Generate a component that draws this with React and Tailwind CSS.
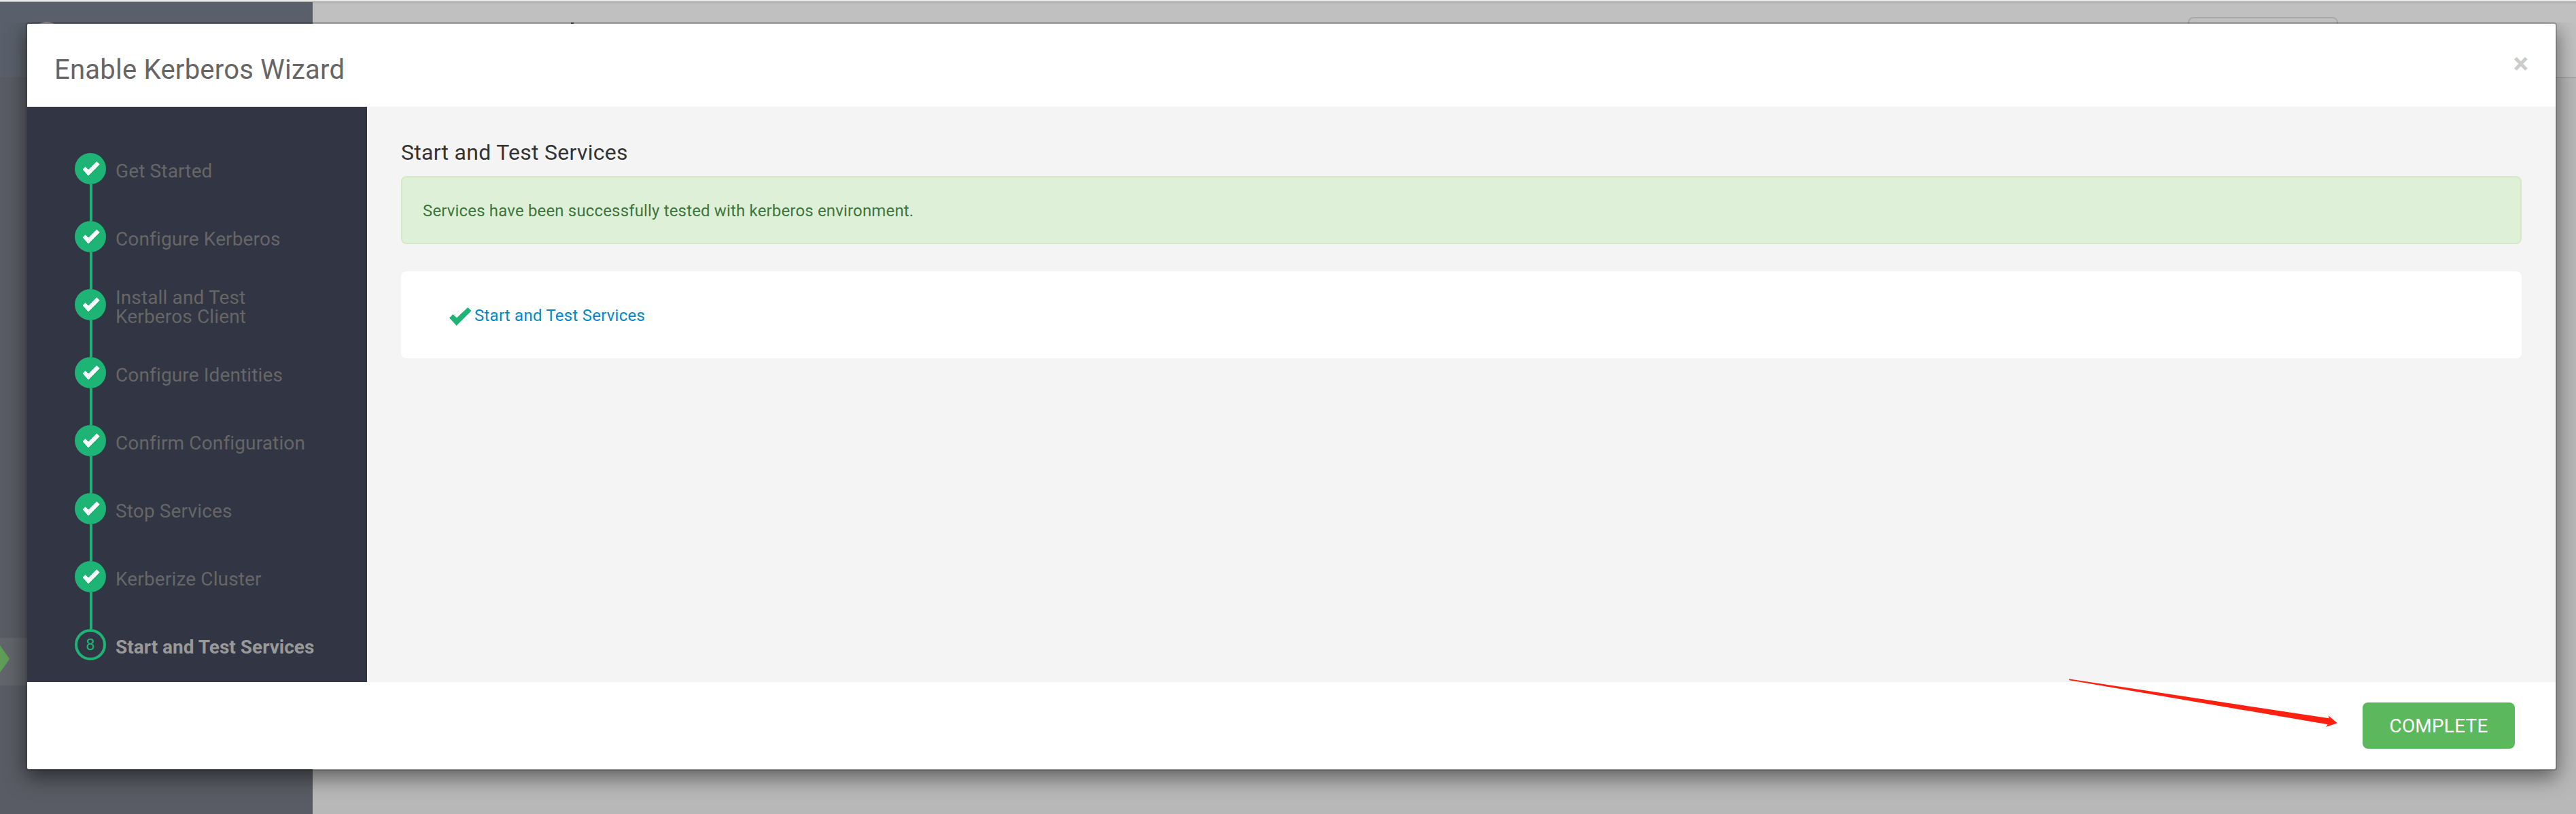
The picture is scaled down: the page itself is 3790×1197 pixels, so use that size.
import React from "react";

const steps = [
  "Get Started",
  "Configure Kerberos",
  "Install and Test Kerberos Client",
  "Configure Identities",
  "Confirm Configuration",
  "Stop Services",
  "Kerberize Cluster",
  "Start and Test Services",
];

function StepBadge({ active, number }) {
  if (active) {
    return (
      <div className="flex h-[46px] w-[46px] shrink-0 items-center justify-center rounded-full border-4 border-[#1eb475] text-2xl leading-none text-[#1eb475]">
        {number}
      </div>
    );
  }
  return (
    <div className="h-[46px] w-[46px] shrink-0 rounded-full bg-[#1eb475]">
      <svg viewBox="0 0 46 46" className="h-full w-full">
        <path
          d="M12 24L15.7 20.9L20 25L32.3 12.9L36 16.7L20 33Z"
          fill="#fff"
          stroke="#fff"
          strokeWidth="1"
          strokeLinejoin="round"
        />
      </svg>
    </div>
  );
}

function Step({ label, number, active }) {
  return (
    <li className="flex h-[100px]">
      <div className="flex w-[46px] flex-col items-center">
        <StepBadge active={active} number={number} />
        {!active && <div className="ml-[2px] w-1 flex-1 bg-[#1eb475]" />}
      </div>
      <div
        className={
          active
            ? "ml-[14px] mt-1 flex h-[46px] items-center text-[28px] font-bold leading-7 whitespace-nowrap text-[#999]"
            : "ml-[14px] mt-1 flex h-[46px] w-[290px] items-center text-[28px] leading-7 tracking-[0.14px] text-[#666]"
        }
      >
        <span className={number === 3 ? "w-[230px]" : "whitespace-nowrap"}>{label}</span>
      </div>
    </li>
  );
}

function Backdrop() {
  return (
    <div className="flex h-full flex-col bg-[#b8b8b8]">
      <div className="h-px bg-[#f4f6f4]" />
      <div className="h-[2px] bg-[#bbbebb]" />
      <div className="flex flex-1">
        <div className="flex w-[460px] flex-col bg-[#595c64]">
          <div className="flex h-[110px] items-start bg-[#5a606b] pl-[47px] pt-[29px]">
            <div className="h-11 w-11 rounded-full bg-[#a09a9c]" />
          </div>
          <div className="mt-[825px] flex h-[70px] items-center bg-[#62656b]">
            <svg viewBox="0 0 14 40" className="mt-[-8px] h-10 w-[14px]">
              <path d="M0 0L14 20L0 40Z" fill="#609d57" />
            </svg>
          </div>
        </div>
        <div className="flex-1">
          <div className="flex h-28 items-start border-y-2 border-t-[#b1b1b1] border-b-[#a9a9a9] bg-[#c0c0c0]">
            <div className="ml-[380px] mt-[28px] h-1 w-1 bg-[#444b55]" />
            <div className="ml-[2375px] mt-5 h-16 w-[221px] rounded-lg border-2 border-[#a9a9a9]" />
          </div>
        </div>
      </div>
    </div>
  );
}

export default function App() {
  return (
    <div className="relative flex h-[1197px] w-[3790px] flex-col overflow-hidden font-['Roboto',sans-serif]">
      <Backdrop />
      <div className="absolute inset-x-0 bottom-0 top-[33px] overflow-hidden px-[38px]">
        <div className="flex h-[1100px] w-[3724px] flex-col rounded-[4px] border-2 border-black/20 bg-white bg-clip-padding shadow-[0_10px_30px_rgba(0,0,0,0.5)]">
          <header className="flex h-[122px] items-start justify-between pl-10 pr-10">
            <h1 className="mt-11 text-[40px] leading-[48px] tracking-[0.24px] text-[#666]">
              Enable Kerberos Wizard
            </h1>
            <button className="mt-[38px] text-[42px] font-bold leading-[42px] text-[#ccc]">×</button>
          </header>
          <div className="flex h-[846px]">
            <ol className="w-[500px] bg-[#323544] pl-[70px] pt-[68px]">
              {steps.map((label, i) => (
                <Step key={label} label={label} number={i + 1} active={i === 7} />
              ))}
            </ol>
            <main className="flex-1 bg-[#f4f4f4] px-[50px] pt-[49px]">
              <h2 className="text-[32px] leading-9 tracking-[0.28px] text-[#333]">Start and Test Services</h2>
              <div className="mt-[17px] flex h-[100px] items-center rounded-lg border-2 border-[#d6e9c6] bg-[#dff0d8] px-[30px] pt-[2px] text-2xl tracking-[0.16px] text-[#3c763d]">
                Services have been successfully tested with kerberos environment.
              </div>
              <div className="mt-10 flex h-32 items-center rounded-lg bg-white pl-[70px]">
                <svg viewBox="0 0 34 28" className="mt-[3px] h-7 w-[34px]">
                  <path
                    d="M1.6 16.4L6.4 11.6L12 16.7L28.3 1.4L33 6L11.7 27.6Z"
                    fill="#1eb475"
                    stroke="#1eb475"
                    strokeWidth="0.8"
                    strokeLinejoin="round"
                  />
                </svg>
                <a className="ml-1 mt-[2px] text-2xl tracking-[0.24px] text-[#0088cc]">Start and Test Services</a>
              </div>
            </main>
          </div>
          <footer className="flex flex-1 items-center justify-end pr-[60px]">
            <button className="h-[68px] w-56 rounded-lg bg-[#5cb85c] pt-[2px] text-[28px] leading-[66px] tracking-[0.2px] text-white">
              COMPLETE
            </button>
          </footer>
        </div>
      </div>
      <svg viewBox="0 0 396 72" className="absolute left-[3044px] top-[998px] h-[72px] w-[396px]">
        <path d="M0 0.3L382.6 58.3L381.6 54.3L394.8 65.3L378.2 71L380.7 67.3L0.5 2.2Z" fill="#ff2010" />
      </svg>
    </div>
  );
}
